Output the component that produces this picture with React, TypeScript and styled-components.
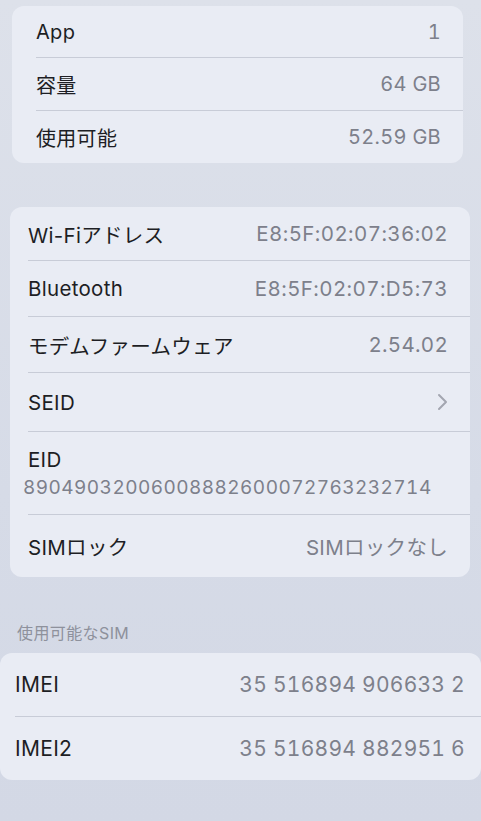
import React from "react";
import styled, { createGlobalStyle } from "styled-components";

const GlobalStyle = createGlobalStyle`
  html, body {
    margin: 0;
    padding: 0;
    background: #d9dde8;
  }
  body {
    font-family: Inter, "Noto Sans CJK JP", "Noto Sans", sans-serif;
    -webkit-font-smoothing: antialiased;
  }
`;

const Screen = styled.div`
  width: 481px;
  height: 821px;
  overflow: hidden;
  background: linear-gradient(180deg, #dde1ea 0%, #d6dbe7 60%, #d3d8e5 100%);
  display: flex;
  flex-direction: column;
`;

const Card = styled.div<{ $left: number; $right: number; $top: number; $pad: number; $padRight: number; $size?: number }>`
  margin: ${(p) => p.$top}px ${(p) => p.$right}px 0 ${(p) => p.$left}px;
  background: #e9ecf4;
  border-radius: 12px;
  padding-left: ${(p) => p.$pad}px;
  --pad-right: ${(p) => p.$padRight}px;
  --font-size: ${(p) => p.$size ?? 20}px;
  display: flex;
  flex-direction: column;
`;

const Row = styled.div<{ $h: number; $last?: boolean }>`
  height: ${(p) => p.$h}px;
  display: flex;
  align-items: center;
  justify-content: space-between;
  padding-right: var(--pad-right);
  border-bottom: ${(p) => (p.$last ? "none" : "1px solid #c8ccd7")};
  box-sizing: border-box;
`;

const StackRow = styled.div<{ $h: number }>`
  height: ${(p) => p.$h}px;
  display: flex;
  flex-direction: column;
  justify-content: center;
  gap: 4px;
  border-bottom: 1px solid #c8ccd7;
  box-sizing: border-box;
`;

const Label = styled.span`
  font-size: var(--font-size);
  color: #1d1e24;
  letter-spacing: 0.3px;
`;

const Value = styled.span<{ $spacing?: number }>`
  font-size: var(--font-size);
  color: #7d808b;
  font-variant-numeric: tabular-nums;
  letter-spacing: ${(p) => p.$spacing ?? 0.3}px;
  display: flex;
  align-items: center;
`;

const Eid = styled.span`
  font-size: 19px;
  color: #7d808b;
  font-variant-numeric: tabular-nums;
  letter-spacing: 0.45px;
  margin-left: -5px;
`;

const SectionHeader = styled.div`
  margin: 44px 0 0 17px;
  font-size: 16px;
  color: #8e919c;
  letter-spacing: 0.4px;
  height: 24px;
  line-height: 24px;
`;

const Chevron = () => (
  <svg width="11" height="18" viewBox="0 0 11 18" fill="none">
    <path d="M2 2l7 7-7 7" stroke="#a3a6b0" strokeWidth="2" strokeLinecap="round" strokeLinejoin="round" />
  </svg>
);

export default function App() {
  return (
    <>
      <GlobalStyle />
      <Screen>
        <Card $left={12} $right={18} $top={6} $pad={24} $padRight={22}>
          <Row $h={52}>
            <Label>App</Label>
            <Value>1</Value>
          </Row>
          <Row $h={53}>
            <Label>容量</Label>
            <Value>64 GB</Value>
          </Row>
          <Row $h={52} $last>
            <Label>使用可能</Label>
            <Value>52.59 GB</Value>
          </Row>
        </Card>

        <Card $left={10} $right={11} $top={44} $pad={18} $padRight={22} $size={20.5}>
          <Row $h={54}>
            <Label>Wi-Fiアドレス</Label>
            <Value $spacing={0.4}>E8:5F:02:07:36:02</Value>
          </Row>
          <Row $h={56}>
            <Label>Bluetooth</Label>
            <Value $spacing={0.4}>E8:5F:02:07:D5:73</Value>
          </Row>
          <Row $h={56}>
            <Label>モデムファームウェア</Label>
            <Value>2.54.02</Value>
          </Row>
          <Row $h={59}>
            <Label>SEID</Label>
            <Value>
              <Chevron />
            </Value>
          </Row>
          <StackRow $h={83}>
            <Label>EID</Label>
            <Eid>89049032006008882600072763232714</Eid>
          </StackRow>
          <Row $h={62} $last>
            <Label>SIMロック</Label>
            <Value>SIMロックなし</Value>
          </Row>
        </Card>

        <SectionHeader>使用可能なSIM</SectionHeader>

        <Card $left={0} $right={0} $top={8} $pad={15} $padRight={16} $size={21}>
          <Row $h={64}>
            <Label>IMEI</Label>
            <Value $spacing={0.25}>35 516894 906633 2</Value>
          </Row>
          <Row $h={63} $last>
            <Label>IMEI2</Label>
            <Value $spacing={0.25}>35 516894 882951 6</Value>
          </Row>
        </Card>
      </Screen>
    </>
  );
}
